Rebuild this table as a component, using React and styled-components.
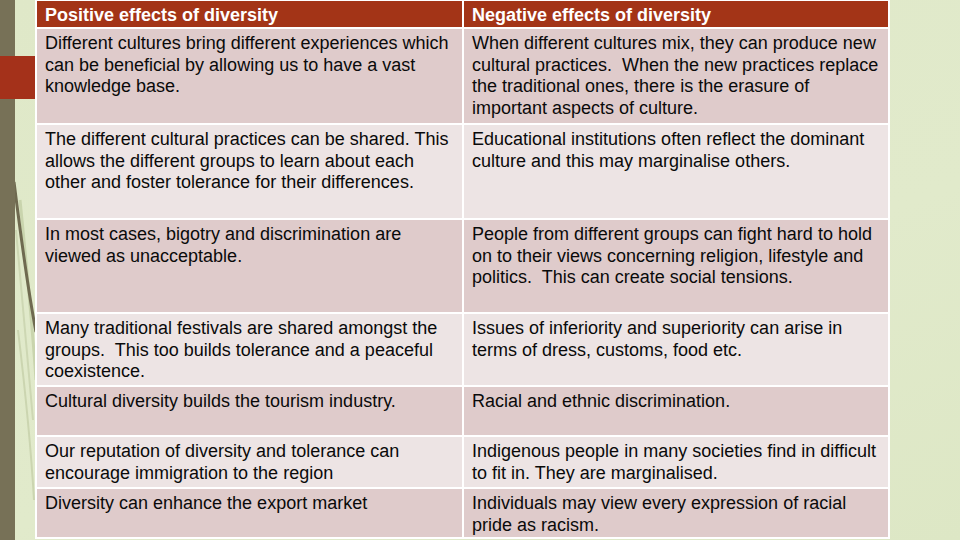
import React from "react";
import styled, { createGlobalStyle } from "styled-components";

const GlobalStyle = createGlobalStyle`
  html, body {
    margin: 0;
    padding: 0;
    width: 960px;
    height: 540px;
    overflow: hidden;
    font-family: "Liberation Sans", Arial, sans-serif;
  }
`;

const Slide = styled.div`
  position: relative;
  width: 960px;
  height: 540px;
  background: linear-gradient(160deg, #dfe8c8 0%, #e1eacb 60%, #dde7c5 100%);
  overflow: hidden;
`;

const Decor = styled.svg`
  position: absolute;
  left: 0;
  top: 0;
  pointer-events: none;
`;

const Accent = styled.div`
  position: absolute;
  left: 0;
  top: 56px;
  width: 35px;
  height: 43px;
  background: #a4311a;
`;

const Table = styled.div`
  position: relative;
  margin-left: 35px;
  margin-top: -1px;
  width: 855px;
  padding: 2px;
  box-sizing: border-box;
  background: #ffffff;
  display: grid;
  grid-template-columns: 425px 424px;
  grid-template-rows: 26px 94px 93px 92px 71px 48px 50px 48px;
  gap: 2px;
`;

const HeadCell = styled.div`
  background: #a33417;
  color: #ffffff;
  font-weight: bold;
  font-size: 18px;
  line-height: 21px;
  padding: 4px 8px 0 8px;
  white-space: pre;
`;

const Cell = styled.div`
  background: ${(p) => (p.$dark ? "#dfcbcb" : "#ede4e4")};
  color: #0a0a0a;
  font-size: 18px;
  line-height: 21.6px;
  padding: 4px 8px 0 8px;
  white-space: pre;
  overflow: hidden;
`;

const rows = [
  [
    ["Different cultures bring different experiences which", "can be beneficial by allowing us to have a vast", "knowledge base."],
    ["When different cultures mix, they can produce new", "cultural practices.  When the new practices replace", "the traditional ones, there is the erasure of", "important aspects of culture."],
  ],
  [
    ["The different cultural practices can be shared. This", "allows the different groups to learn about each", "other and foster tolerance for their differences."],
    ["Educational institutions often reflect the dominant", "culture and this may marginalise others."],
  ],
  [
    ["In most cases, bigotry and discrimination are", "viewed as unacceptable."],
    ["People from different groups can fight hard to hold", "on to their views concerning religion, lifestyle and", "politics.  This can create social tensions."],
  ],
  [
    ["Many traditional festivals are shared amongst the", "groups.  This too builds tolerance and a peaceful", "coexistence."],
    ["Issues of inferiority and superiority can arise in", "terms of dress, customs, food etc."],
  ],
  [
    ["Cultural diversity builds the tourism industry."],
    ["Racial and ethnic discrimination."],
  ],
  [
    ["Our reputation of diversity and tolerance can", "encourage immigration to the region"],
    ["Indigenous people in many societies find in difficult", "to fit in. They are marginalised."],
  ],
  [
    ["Diversity can enhance the export market"],
    ["Individuals may view every expression of racial", "pride as racism."],
  ],
];

const Lines = ({ lines }) =>
  lines.map((l, i) => (
    <React.Fragment key={i}>
      {i > 0 && <br />}
      {l}
    </React.Fragment>
  ));

export default function App() {
  return (
    <Slide>
      <GlobalStyle />
      <Decor width="60" height="540" viewBox="0 0 60 540">
        <path d="M20 200 C 26 260, 32 320, 36 380" stroke="#c9d4ad" strokeWidth="3" fill="none" />
        <path d="M16 230 C 22 300, 28 360, 33 420" stroke="#cdd7b3" strokeWidth="2" fill="none" />
        <path d="M18 330 C 24 380, 30 430, 34 500" stroke="#cbd5b0" strokeWidth="2" fill="none" />
        <path d="M14 182 C 20 230, 28 290, 36 332" stroke="#6f6a50" strokeWidth="3" fill="none" />
        <rect x="0" y="0" width="15" height="540" fill="#777157" />
      </Decor>
      <Accent />
      <Table>
        <HeadCell>Positive effects of diversity</HeadCell>
        <HeadCell>Negative effects of diversity</HeadCell>
        {rows.map((r, i) => (
          <React.Fragment key={i}>
            <Cell $dark={i % 2 === 0}>
              <Lines lines={r[0]} />
            </Cell>
            <Cell $dark={i % 2 === 0}>
              <Lines lines={r[1]} />
            </Cell>
          </React.Fragment>
        ))}
      </Table>
    </Slide>
  );
}
